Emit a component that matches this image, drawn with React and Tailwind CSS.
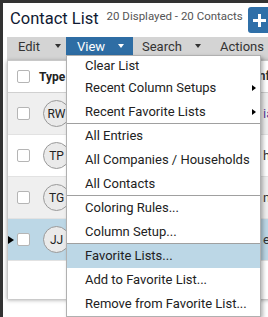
import React from 'react';

const menuItems = [
  { label: 'Clear List', first: true },
  { label: 'Recent Column Setups', sub: true },
  { label: 'Recent Favorite Lists', sub: true, sep: true },
  { label: 'All Entries' },
  { label: 'All Companies / Households' },
  { label: 'All Contacts', sep: true },
  { label: 'Coloring Rules...' },
  { label: 'Column Setup...', sep: true },
  { label: 'Favorite Lists...', active: true },
  { label: 'Add to Favorite List...' },
  { label: 'Remove from Favorite List...' },
];

const rows = [
  { initials: 'RW', bg: 'bg-[#efefef]', peek: 'ia', peekColor: 'text-[#5b3b9b]' },
  { initials: 'TP', bg: 'bg-white', peek: 'h', peekColor: 'text-[#333]' },
  { initials: 'TG', bg: 'bg-[#efefef]', peek: 'n', peekColor: 'text-[#333]' },
  { initials: 'JJ', bg: 'bg-[#bcd7e6]', peek: 'e', peekColor: 'text-[#333]', selected: true },
];

const Caret = ({ white }) => (
  <span
    className={
      white
        ? 'w-0 h-0 border-x-[3px] border-x-transparent border-t-[4px] border-t-white'
        : 'w-0 h-0 border-x-[3px] border-x-transparent border-t-[4px] border-t-[#333]'
    }
  />
);

const Checkbox = () => (
  <span className="w-[13px] h-[13px] shrink-0 border border-[#b5b5b5] bg-white rounded-[2px]" />
);

const App = () => {
  return (
    <div className="w-[268px] h-[317px] overflow-hidden bg-white flex font-['Roboto',sans-serif]">
      <div className="w-[3px] shrink-0 bg-[#333]" />
      <div className="relative flex-1 min-w-0 flex flex-col">
        <div className="h-[3px] shrink-0 bg-[#333]" />

        {/* title */}
        <div className="h-[34px] w-[267px] shrink-0 flex items-center pl-[7px]">
          <h1 className="text-[16.5px] leading-none text-[#0f1a33] mb-[2px] whitespace-nowrap">
            Contact List
          </h1>
          <span className="ml-[8px] mb-[6px] text-[11.5px] leading-none text-[#555] whitespace-nowrap">
            20 Displayed - 20 Contacts
          </span>
          <button className="ml-auto w-[22px] h-[26px] bg-[#2f6fa8] rounded-[3px] flex items-center justify-center">
            <svg width="13" height="13" viewBox="0 0 13 13">
              <rect x="5" y="0" width="3" height="13" fill="white" />
              <rect x="0" y="5" width="13" height="3" fill="white" />
            </svg>
          </button>
        </div>

        {/* toolbar */}
        <div className="ml-[4px] w-[270px] h-[23px] shrink-0 bg-[#d4d4d4] text-[13px] leading-none text-[#333]">
          <div className="h-[18px] flex items-center">
            <div className="w-[59px] h-full flex items-center justify-between pl-[11px] pr-[5px]">
              <span>Edit</span>
              <Caret />
            </div>
            <div className="w-[67px] h-full flex items-center justify-between pl-[11px] pr-[9px] bg-[#2e6da4] text-white">
              <span>View</span>
              <Caret white />
            </div>
            <div className="w-[75px] h-full flex items-center justify-between pl-[9px] pr-[7px]">
              <span>Search</span>
              <Caret />
            </div>
            <div className="h-full flex items-center pl-[12px]">
              <span>Actions</span>
            </div>
          </div>
        </div>

        {/* table card */}
        <div className="ml-[4px] w-[270px] h-[239px] shrink-0 bg-white border-t border-l border-[#c8c8c8] shadow-[0_1px_4px_rgba(0,0,0,0.35)] flex flex-col">
          <div className="h-[32px] shrink-0 flex items-center border-b border-[#d0d0d0]">
            <div className="w-[255px] flex items-center">
              <span className="w-[9px]" />
              <Checkbox />
              <span className="ml-[9px] text-[12px] font-bold text-[#222]">Type</span>
            </div>
            <span className="text-[12.5px] font-bold text-[#333]">Info</span>
          </div>
          {rows.map((row) => (
            <div
              key={row.initials}
              className={`h-[42px] shrink-0 flex items-center border-b border-[#e2e2e2] ${row.bg}`}
            >
              <div className="w-[255px] flex items-center">
                <span className="w-[9px] flex items-center">
                  {row.selected && (
                    <span className="w-0 h-0 border-y-[4px] border-y-transparent border-l-[6px] border-l-black" />
                  )}
                </span>
                <Checkbox />
                <span className="ml-[13px] w-[27px] h-[27px] rounded-full border border-[#999] bg-[#eaeaea] flex items-center justify-center text-[12px] text-[#222]">
                  {row.initials}
                </span>
              </div>
              <span className={`text-[13px] ${row.peekColor}`}>{row.peek}</span>
            </div>
          ))}
        </div>

        {/* View menu */}
        <div className="absolute left-[63px] top-[55px] w-[195px] bg-white border border-[#b0b0b0] shadow-[2px_2px_4px_rgba(0,0,0,0.3)] text-[13px] text-[#222]">
          {menuItems.map((item) => (
            <div
              key={item.label}
              className={`${item.first ? 'h-[20px]' : 'h-[24px]'} flex items-center justify-between pl-[18px] pr-[4px] whitespace-nowrap ${
                item.sep ? 'border-b border-[#a0a0a0]' : ''
              } ${item.active ? 'bg-[#bcd7e6]' : ''}`}
            >
              <span>{item.label}</span>
              {item.sub && (
                <span className="w-0 h-0 border-y-[3.5px] border-y-transparent border-l-[4px] border-l-black" />
              )}
            </div>
          ))}
        </div>
      </div>
    </div>
  );
};

export default App;
